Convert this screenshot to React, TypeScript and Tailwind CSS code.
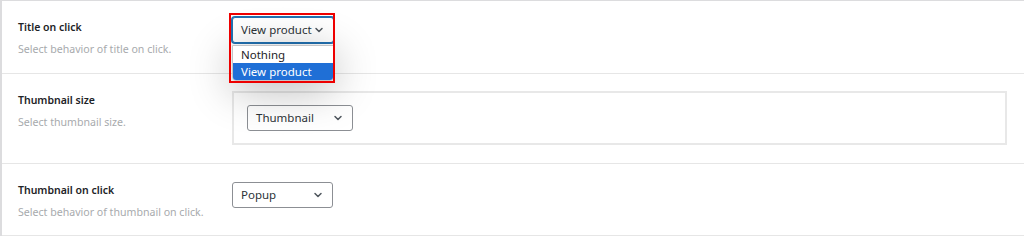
import { ChevronDown } from "lucide-react";

const font = { fontFamily: '"Noto Sans", "Open Sans", sans-serif' };

interface RowProps {
  title: string;
  subtitle: string;
  children: React.ReactNode;
  className?: string;
}

const Row = ({ title, subtitle, children, className }: RowProps) => {
  return (
    <div className={`flex border-b border-[#e6e6e6] pl-[16px] pr-[17px] ${className ?? ""}`}>
      <div className="w-[214px] shrink-0 pt-[18px]">
        <div className="text-[10.5px] font-semibold leading-[16px] text-[#1d2327]">{title}</div>
        <div className="mt-[6px] text-[10.6px] leading-[16px] text-[#a7aaad]">{subtitle}</div>
      </div>
      <div className="flex-1">{children}</div>
    </div>
  );
};

const Select = ({ value, width, focused }: { value: string; width: string; focused?: boolean }) => {
  return (
    <div
      className={`flex h-[26px] items-center justify-between whitespace-nowrap rounded-[3px] border bg-white pl-[8px] pr-[8px] text-[11.5px] text-[#2c3338] ${width} ${
        focused ? "border-[#2271b1] shadow-[0_0_0_1px_#2271b1]" : "border-[#8c8f94]"
      }`}
    >
      <span>{value}</span>
      <ChevronDown className="h-[12px] w-[12px] shrink-0 text-[#50575e]" strokeWidth={3} />
    </div>
  );
};

export default function App() {
  return (
    <div className="h-[237px] w-[1024px] overflow-hidden bg-white" style={font}>
      <div className="border-l-2 border-t border-[#dcdcde] border-l-[#dcdcde]">
        <Row title="Title on click" subtitle="Select behavior of title on click." className="h-[73px]">
          <div className="relative mt-[16px] w-[100px]">
            <Select value="View product" width="w-[102px]" focused />
            <div className="absolute left-0 top-[28px] z-10 w-[102px] overflow-hidden rounded-b-[4px] border border-[#c3c4c7] bg-white text-[11.5px] leading-[17px] text-[#1d2327] shadow-[0_8px_44px_rgba(0,0,0,0.3)]">
              <div className="pl-[8px]">Nothing</div>
              <div className="bg-[#1f6fd6] pl-[8px] text-white">View product</div>
            </div>
            <div className="pointer-events-none absolute left-[-3px] top-[-4px] z-20 h-[70px] w-[106px] border-2 border-[#ee0000]" />
          </div>
        </Row>
        <Row title="Thumbnail size" subtitle="Select thumbnail size." className="h-[90px]">
          <div className="mt-[17px] border-2 border-[#e8e8e8] px-[13px] pb-[12px] pt-[12px]">
            <Select value="Thumbnail" width="w-[106px]" />
          </div>
        </Row>
        <Row title="Thumbnail on click" subtitle="Select behavior of thumbnail on click." className="h-[72px]">
          <div className="mt-[18px]">
            <Select value="Popup" width="w-[101px]" />
          </div>
        </Row>
      </div>
    </div>
  );
}
